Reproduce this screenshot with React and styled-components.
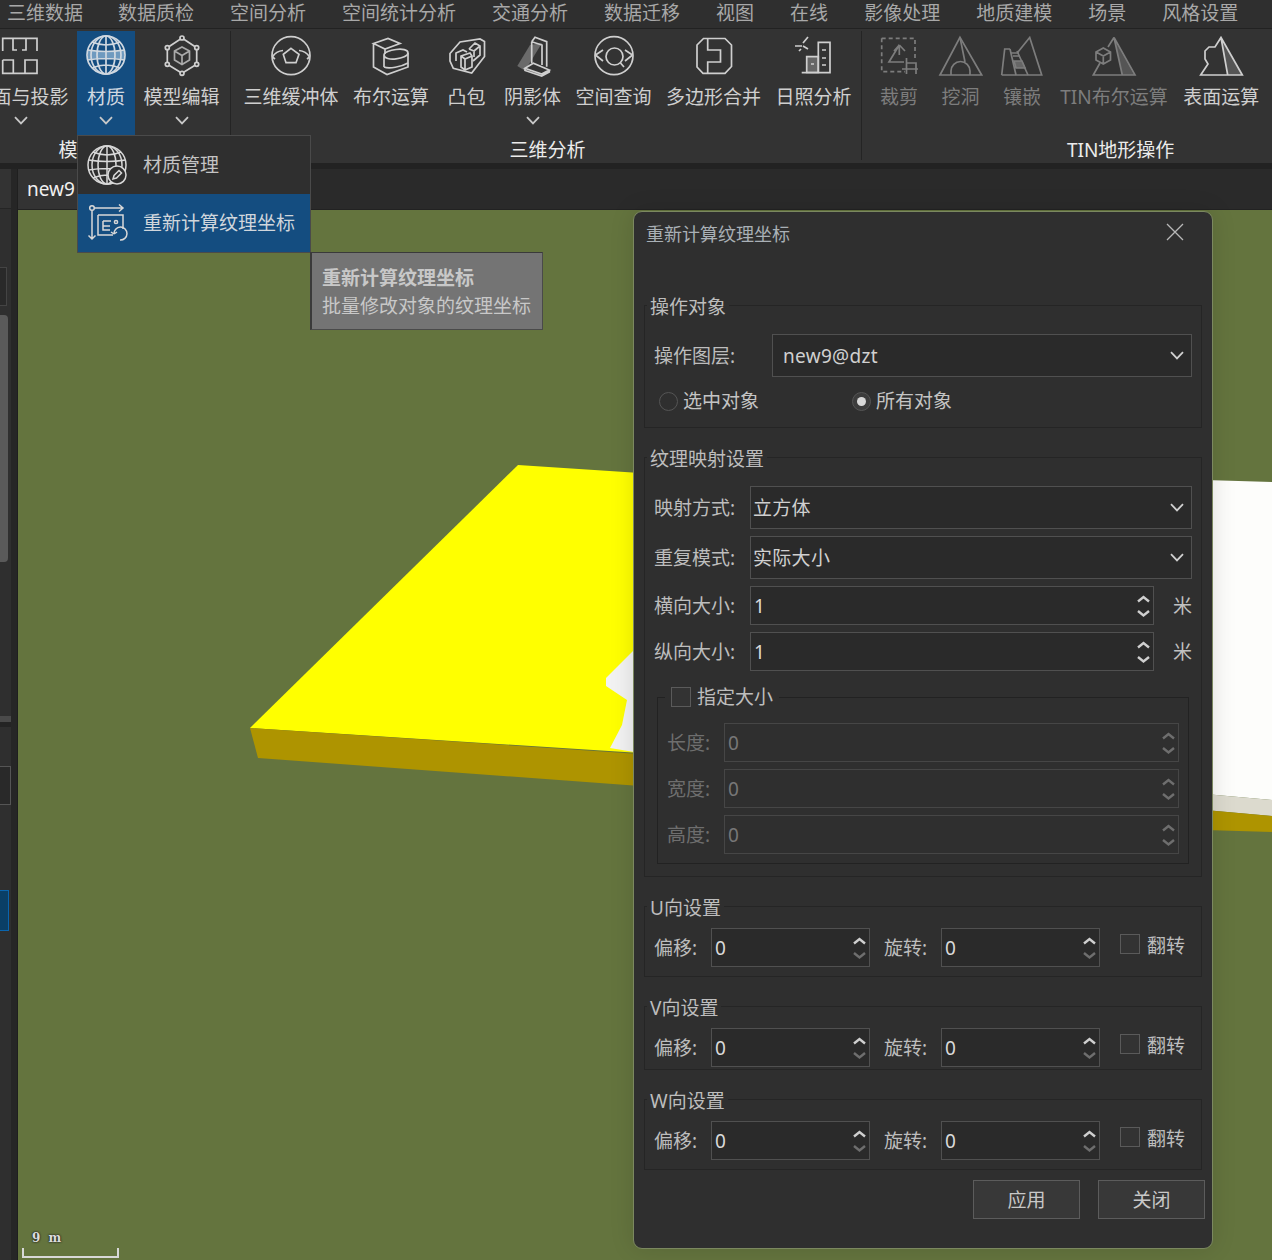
import React from 'react'
import styled, { createGlobalStyle } from 'styled-components'

const GlobalStyle = createGlobalStyle`
    html, body {
        margin: 0;
        padding: 0;
        background: #2f2f2f;
    }
    * {
        box-sizing: border-box;
    }
`

const menus = ['三维数据', '数据质检', '空间分析', '空间统计分析', '交通分析', '数据迁移', '视图', '在线', '影像处理', '地质建模', '场景', '风格设置']

function Chevron({ size = 14 }) {
    return (
        <Glyph width={size} height={9} viewBox="0 0 14 9" $w={1.8}>
            <path d="M1 1.2L7 7.4L13 1.2" />
        </Glyph>
    )
}

function Spinner({ upDim, downDim }) {
    return (
        <SpinBox>
            <SpinArrow width="13" height="26" viewBox="0 0 13 26" $dim={upDim}>
                <path d="M1 8.500L6.500 4L12 8.500" />
            </SpinArrow>
            <SpinArrow width="13" height="26" viewBox="0 0 13 26" $dim={downDim}>
                <path d="M1 18L6.500 22.500L12 18" />
            </SpinArrow>
        </SpinBox>
    )
}

function RibbonIcon({ children }) {
    return (
        <IconBox>
            <Glyph width="48" height="48" viewBox="0 0 48 48" $w={1.7}>
                {children}
            </Glyph>
        </IconBox>
    )
}

const FloorIcon = () => (
    <RibbonIcon>
        <path d="M5.700 20V7.300H40V20M16 8V19H20M29 8V19H25" />
        <path d="M5.700 29H16.300V42M5.700 29V42.300H40V29H28V42" />
    </RibbonIcon>
)

const GlobeLines = () => (
    <>
        <circle cx="24" cy="24" r="19" />
        <ellipse cx="24" cy="24" rx="9" ry="19" />
        <ellipse cx="24" cy="24" rx="15" ry="19" />
        <path d="M24 5V43M10 11Q24 17 38 11M5.500 19Q24 22 42.500 19M5.500 29Q24 26 42.500 29M10 37Q24 31 38 37" />
    </>
)

const GlobeIcon = () => (
    <RibbonIcon>
        <path d="M6 19.500Q24 22 42 19.500V29Q24 26.500 6 29Z" fill="#6f9abf" stroke="none" />
        <GlobeLines />
    </RibbonIcon>
)

const ModelIcon = () => (
    <RibbonIcon>
        <path d="M24 7L38.700 16.700V33.300L24 42.300L9.300 33.300V16.700Z" />
        <g fill="#333">
            <circle cx="24" cy="7" r="2" />
            <circle cx="38.700" cy="16.700" r="2" />
            <circle cx="38.700" cy="33.300" r="2" />
            <circle cx="24" cy="42.300" r="2" />
            <circle cx="9.300" cy="33.300" r="2" />
            <circle cx="9.300" cy="16.700" r="2" />
        </g>
        <path d="M24 16L31.500 20V29L24 33.500L16.500 29V20ZM16.500 20L24 24.500L31.500 20M24 24.500V33.500" stroke="#aaa" />
    </RibbonIcon>
)

const BufferIcon = () => (
    <RibbonIcon>
        <circle cx="24" cy="24.700" r="19" />
        <path d="M24 17.400L32 23.400L29 31.700H19L16.300 23.400Z" />
        <path d="M5.500 26Q9 20 16 19.500M42.500 26Q39 20 32 19.500M5.500 26L8 28M42.500 26L40 28" />
    </RibbonIcon>
)

const BooleanIcon = () => (
    <RibbonIcon>
        <path d="M6.500 12.500L21 7.500L33 12.500L18 18ZM6.500 12.500V36L20 43.500L41 36V22M18 18V23" />
        <path d="M17 24C17 19 41 15 41 22C41 28 17 31 17 24ZM17 24V36" />
        <path d="M17 36C22 38 34 36 41 32" />
    </RibbonIcon>
)

const HullIcon = () => (
    <RibbonIcon>
        <path d="M7 22.500L17 11L37 8L41.500 10.500V25.500L28.700 42L10.300 37.300L7 30Z" />
        <path d="M18 25L27 22L29 25V36L22 39L18 36ZM18 25L22 28L29 25M22 28V39" />
        <path d="M13 30V22L20 19L24 21M26 18L32 12L37 15V24L30 30M26 18L31 20L37 15M31 20V26" />
    </RibbonIcon>
)

const ShadowIcon = () => (
    <RibbonIcon>
        <path d="M21 14L8.300 35L16 39.700L33 12Z" fill="#6a6a6a" stroke="none" />
        <path d="M22.700 10.700L26 6.300L37.700 10.700V35.700M22.700 10.700L33 14V34M22.700 10.700V32.300" />
        <path d="M16 37.300L24.300 32.300L40.300 39L32.700 43ZM16 37.300V39.500L32.700 45L40.300 41V39" />
    </RibbonIcon>
)

const QueryIcon = () => (
    <RibbonIcon>
        <circle cx="24" cy="24.700" r="19" />
        <circle cx="24.500" cy="25.500" r="8.500" />
        <path d="M30.500 32L34 36M5.500 24L13 19M5.500 24L13 30M42.500 24L35 19M42.500 24L35 30" />
    </RibbonIcon>
)

const MergeIcon = () => (
    <RibbonIcon>
        <path d="M13.500 7.500H35L41.500 14V35.500L35 42.300H13L7 36V14Z" />
        <path d="M17.700 7.500V19H30.500V31H17.700V42" />
    </RibbonIcon>
)

const SunIcon = () => (
    <RibbonIcon>
        <path d="M16.700 25.700H28.300V41.500H16.700Z" fill="#666" />
        <path d="M28.300 41.700V11.300H40V41.700H11.700" />
        <path d="M32 19H36M32 27H36M32 34H36M21 33H24" />
        <path d="M5 15H12M13 12L18 6M13 15L18 18M11 18L9 20" />
    </RibbonIcon>
)

const CropIcon = () => (
    <RibbonIcon>
        <path d="M6.700 7.300H40V30M6.700 7.300V40.700H30" strokeDasharray="4 3" />
        <path d="M24.300 14L14 31H29M24.300 14L19 20M24.300 14L30 20M24.300 14V24" />
        <path d="M31.500 27V43M27 38H43M31.500 32H41V43" />
    </RibbonIcon>
)

const HoleIcon = () => (
    <RibbonIcon>
        <path d="M23 6.300L44.700 44H3Z" />
        <path d="M14 44V40A9.500 9.500 0 0 1 33 40V44M23 6.300L28 31" />
    </RibbonIcon>
)

const MosaicIcon = () => (
    <RibbonIcon>
        <path d="M3.700 44L6.700 18H12M20 21L31.700 6.500L43.700 44H3.700" />
        <path d="M12 18L18 44M19 20L30 44" />
        <path d="M16 30H24L27 37H18Z" fill="#666" />
        <path d="M13 22H21M15 25H22" />
    </RibbonIcon>
)

const TinBoolIcon = () => (
    <RibbonIcon>
        <path d="M24 8L32.300 44H44Z" fill="#555" stroke="none" />
        <path d="M24 6.500L45 44H3.300L10 32M24 6.500L18 16M24 6.500L32.300 44" />
        <path d="M13.300 17L20.500 21V29L13.300 33L6 29V21ZM6 21L13.300 25L20.500 21M13.300 25V33" />
    </RibbonIcon>
)

const SurfaceIcon = () => (
    <RibbonIcon>
        <path d="M24 8L30.700 44H45Z" fill="#555" stroke="none" />
        <path d="M24 6.500L45.300 44H3.700L11 33L8 28L8 20L12 16L18 16ZM24 6.500L30.700 44" />
    </RibbonIcon>
)

const ManageIcon = () => (
    <MenuGlyph width="48" height="48" viewBox="0 0 48 48" $w={1.5}>
        <GlobeLines />
        <circle cx="34" cy="34" r="9" fill="#2f2f2f" />
        <path d="M30 38L31 34.500L36 29.500L38.500 32L33.500 37Z" />
    </MenuGlyph>
)

const RecalcIcon = () => (
    <MenuGlyph width="48" height="48" viewBox="0 0 48 48" $w={1.5}>
        <circle cx="9" cy="9" r="2.300" />
        <path d="M11.500 9H40M36 5.500L40 9L36 12.500M9 11.500V40M5.500 36.500L9 40L12.500 36.500" />
        <path d="M15 16H40V30M15 16V36H30" />
        <path d="M20 22H28M20 22V31H27M20 27L27 27" />
        <circle cx="33" cy="23" r="1.600" />
        <path d="M31 35A6.500 6.500 0 1 1 37 41M31 35L28 33M31 35L34 33" />
    </MenuGlyph>
)

const firstGroup = [
    { label: '立面与投影', icon: <FloorIcon />, more: true },
    { label: '材质', icon: <GlobeIcon />, more: true, active: true },
    { label: '模型编辑', icon: <ModelIcon />, more: true },
]

const secondGroup = [
    { label: '三维缓冲体', icon: <BufferIcon /> },
    { label: '布尔运算', icon: <BooleanIcon /> },
    { label: '凸包', icon: <HullIcon /> },
    { label: '阴影体', icon: <ShadowIcon />, more: true },
    { label: '空间查询', icon: <QueryIcon /> },
    { label: '多边形合并', icon: <MergeIcon /> },
    { label: '日照分析', icon: <SunIcon /> },
]

const thirdGroup = [
    { label: '裁剪', icon: <CropIcon />, dim: true },
    { label: '挖洞', icon: <HoleIcon />, dim: true },
    { label: '镶嵌', icon: <MosaicIcon />, dim: true },
    { label: 'TIN布尔运算', icon: <TinBoolIcon />, dim: true },
    { label: '表面运算', icon: <SurfaceIcon /> },
]

function ToolGroup({ title, tools, width, left, right, gap, last }) {
    return (
        <Group $width={width} $left={left} $right={right} $last={last}>
            <Tools $gap={gap}>
                {tools.map((t) => (
                    <Tool key={t.label} $active={t.active} $dim={t.dim}>
                        {t.icon}
                        <ToolLabel>{t.label}</ToolLabel>
                        {t.more && <More><Chevron /></More>}
                    </Tool>
                ))}
            </Tools>
            <GroupLabel>{title}</GroupLabel>
        </Group>
    )
}

function OffsetGroup({ axis, bottom }) {
    return (
        <Box $bottom={bottom} $top={10}>
            <Legend>{axis}向设置</Legend>
            <Row>
                <FieldLabel $width={57}>偏移:</FieldLabel>
                <Input $width={159}>0<Spinner downDim /></Input>
                <FieldLabel $width={57} $left={14}>旋转:</FieldLabel>
                <Input $width={159}>0<Spinner downDim /></Input>
                <FlipCheck>
                    <CheckBox />
                    <FlipText>翻转</FlipText>
                </FlipCheck>
            </Row>
        </Box>
    )
}

function SizeRow({ label }) {
    return (
        <Row>
            <FieldLabel $width={57} $dim>{label}:</FieldLabel>
            <Input $grow $off>0<Spinner upDim downDim /></Input>
        </Row>
    )
}

function Dialog() {
    return (
        <DialogBox>
            <TitleBar>
                <Title>重新计算纹理坐标</Title>
                <svg width="18" height="18" viewBox="0 0 18 18" fill="none" stroke="#b8b8b8" strokeWidth="1.3">
                    <path d="M1 1L17 17M17 1L1 17" />
                </svg>
            </TitleBar>
            <Body>
                <Box $bottom={14} $top={17}>
                    <Legend>操作对象</Legend>
                    <Row>
                        <FieldLabel $width={118}>操作图层:</FieldLabel>
                        <Select $text={10}>new9@dzt<Chevron /></Select>
                    </Row>
                    <RadioRow>
                        <RadioItem><Radio /> 选中对象</RadioItem>
                        <RadioItem><Radio $on /> 所有对象</RadioItem>
                    </RadioRow>
                </Box>
                <Box $bottom={12} $top={17}>
                    <Legend>纹理映射设置</Legend>
                    <Stack>
                        <Row>
                            <FieldLabel $width={96}>映射方式:</FieldLabel>
                            <Select $text={2}>立方体<Chevron /></Select>
                        </Row>
                        <Row>
                            <FieldLabel $width={96}>重复模式:</FieldLabel>
                            <Select $text={2}>实际大小<Chevron /></Select>
                        </Row>
                        <Row>
                            <FieldLabel $width={96}>横向大小:</FieldLabel>
                            <Input $grow>1<Spinner /></Input>
                            <Unit>米</Unit>
                        </Row>
                        <Row>
                            <FieldLabel $width={96}>纵向大小:</FieldLabel>
                            <Input $grow>1<Spinner /></Input>
                            <Unit>米</Unit>
                        </Row>
                    </Stack>
                    <InnerBox>
                        <InnerLegend><CheckBox />指定大小</InnerLegend>
                        <Stack>
                            <SizeRow label="长度" />
                            <SizeRow label="宽度" />
                            <SizeRow label="高度" />
                        </Stack>
                    </InnerBox>
                </Box>
                <OffsetGroup axis="U" bottom={9} />
                <OffsetGroup axis="V" bottom={2} />
                <OffsetGroup axis="W" bottom={9} />
                <Actions>
                    <Action>应用</Action>
                    <Action>关闭</Action>
                </Actions>
            </Body>
        </DialogBox>
    )
}

export default function App() {
    return (
        <Page>
            <GlobalStyle />
            <MenuBar>
                {menus.map((m) => <MenuItem key={m}>{m}</MenuItem>)}
            </MenuBar>
            <Ribbon>
                <ToolGroup title="模型处理" tools={firstGroup} left={6.5} right={4.5} gap={2.5} />
                <ToolGroup title="三维分析" tools={secondGroup} left={6.5} right={3.5} gap={2.5} />
                <ToolGroup title="TIN地形操作" tools={thirdGroup} left={8} right={3} gap={3.4} width={512} last />
            </Ribbon>
            <Workspace>
                <Sidebar>
                    <SideHead />
                    <SideField />
                    <SideScroll />
                    <SideSplit />
                    <SideField $gap={44} $bright />
                    <SideSelected />
                </Sidebar>
                <Gutter />
                <Main>
                    <TabBar>
                        <Tab>new9</Tab>
                    </TabBar>
                    <Viewport>
                        <Scene viewBox="18 210 1254 1050" width="1254" height="1050">
                            <polygon points="518,465 640,473 640,753 250,728" fill="#ffff00" />
                            <polygon points="250,728 640,754 640,786 258,758" fill="#ae9400" />
                            <polygon points="640,644 606,678 606,686 627,700 622,725 610,748 640,753" fill="#f2f2f2" />
                            <polygon points="1205,480 1272,482 1272,800 1205,794" fill="#fdfdfb" />
                            <polygon points="1205,794 1272,800 1272,816 1205,810" fill="#dcdace" />
                            <polygon points="1205,810 1272,816 1272,832 1205,830" fill="#ae9400" />
                        </Scene>
                        <ScaleText>9 m</ScaleText>
                        <ScaleBar />
                    </Viewport>
                </Main>
            </Workspace>
            <Dropdown>
                <DropItem>
                    <ManageIcon />
                    材质管理
                </DropItem>
                <DropItem $active>
                    <RecalcIcon />
                    重新计算纹理坐标
                </DropItem>
            </Dropdown>
            <Tooltip>
                <TipTitle>重新计算纹理坐标</TipTitle>
                <TipText>批量修改对象的纹理坐标</TipText>
            </Tooltip>
            <Dialog />
        </Page>
    )
}

const Page = styled.div`
    position: relative;
    width: 1272px;
    height: 1260px;
    overflow: hidden;
    display: flex;
    flex-direction: column;
    background: #2f2f2f;
    font-family: "Noto Sans", "Noto Sans CJK SC", sans-serif;
    font-size: 19px;
    line-height: 24px;
    color: #c4c4c4;
`

const Glyph = styled.svg`
    display: block;
    fill: none;
    stroke: currentColor;
    stroke-width: ${(p) => p.$w};
`

const MenuBar = styled.div`
    display: flex;
    gap: 36px;
    flex: none;
    height: 29px;
    padding: 1px 0 0 7px;
    background: #2f2f2f;
    border-bottom: 1px solid #222;
    color: #a8a8a8;
    white-space: nowrap;
`

const MenuItem = styled.div`
    flex: none;

    &:first-child {
        margin-right: -1px;
    }
`

const Ribbon = styled.div`
    display: flex;
    flex: none;
    height: 134px;
    padding-top: 2px;
    margin-left: -39px;
    background: #333;
`

const Group = styled.div`
    flex: none;
    width: ${(p) => (p.$width ? p.$width + 'px' : 'auto')};
    height: 129px;
    padding: 0 ${(p) => p.$right}px 0 ${(p) => p.$left}px;
    border-right: ${(p) => (p.$last ? 'none' : '1px solid #242424')};
`

const Tools = styled.div`
    display: flex;
    gap: ${(p) => p.$gap}px;
`

const Tool = styled.div`
    display: flex;
    flex-direction: column;
    align-items: center;
    flex: none;
    min-width: 58px;
    height: 104px;
    padding: 0 6px;
    background: ${(p) => (p.$active ? '#144d80' : 'transparent')};
    color: ${(p) => (p.$dim ? '#7d7d7d' : p.$active ? '#d0d8e0' : '#cfcfcf')};
`

const IconBox = styled.div`
    flex: none;
    width: 48px;
    height: 48px;
    margin: 0 -6px;
`

const ToolLabel = styled.div`
    margin-top: 6px;
    white-space: nowrap;
`

const More = styled.div`
    margin-top: 7px;
    color: #c8c8c8;
`

const GroupLabel = styled.div`
    margin-top: 3px;
    text-align: center;
    white-space: nowrap;
    color: #ececec;
`

const Workspace = styled.div`
    display: flex;
    flex: 1;
    min-height: 0;
    border-top: 6px solid #222;
`

const Sidebar = styled.div`
    flex: none;
    width: 11px;
    background: #2f2f2f;
`

const SideHead = styled.div`
    height: 40px;
    background: #333;
    border-bottom: 1px solid #252525;
`

const SideField = styled.div`
    width: ${(p) => (p.$bright ? '11px' : '7px')};
    height: 39px;
    margin-top: ${(p) => p.$gap || 58}px;
    background: #292929;
    border: 1px solid ${(p) => (p.$bright ? '#555' : '#444')};
    border-left: none;
`

const SideScroll = styled.div`
    width: 8px;
    height: 247px;
    margin-top: 9px;
    border-radius: 0 4px 4px 0;
    background: #5a5a5a;
`

const SideSplit = styled.div`
    height: 6px;
    margin-top: 154px;
    background: #4a4a4a;
    box-shadow: 0 5px 0 #242424;
`

const SideSelected = styled.div`
    width: 9px;
    height: 41px;
    margin-top: 85px;
    background: #0a3f66;
    border: 1px solid #0a65ae;
    border-left: none;
`

const Gutter = styled.div`
    flex: none;
    width: 7px;
    background: #262626;
    border-right: 1px solid #1f1f1f;
`

const Main = styled.div`
    display: flex;
    flex-direction: column;
    flex: 1;
    min-width: 0;
`

const TabBar = styled.div`
    flex: none;
    height: 41px;
    background: #2a2a2a;
    border-bottom: 1px solid #222;
`

const Tab = styled.div`
    width: 110px;
    height: 40px;
    padding: 8px 0 0 9px;
    background: #333;
    color: #f0f0f0;
`

const Viewport = styled.div`
    position: relative;
    flex: 1;
    background: #64743e;
`

const Scene = styled.svg`
    display: block;
`

const ScaleText = styled.div`
    position: absolute;
    left: 14px;
    bottom: 14px;
    font-family: "DejaVu Serif", serif;
    font-size: 12px;
    font-weight: 700;
    line-height: 16px;
    word-spacing: 4px;
    color: #dcdcdc;
    text-shadow: 0 0 2px #222, 0 0 2px #222;
`

const ScaleBar = styled.div`
    position: absolute;
    left: 4px;
    bottom: 2px;
    width: 97px;
    height: 10px;
    border: 2px solid #d8d8d8;
    border-top: none;
`

const Dropdown = styled.div`
    position: absolute;
    left: 77px;
    top: 135px;
    width: 234px;
    background: #2f2f2f;
    border: 1px solid #4a4a4a;
`

const DropItem = styled.div`
    display: flex;
    align-items: center;
    gap: 12px;
    height: 58px;
    padding-left: 5px;
    white-space: nowrap;
    background: ${(p) => (p.$active ? '#144d80' : 'transparent')};
    color: ${(p) => (p.$active ? '#d0d6dc' : '#c4c4c4')};
`

const MenuGlyph = styled(Glyph)`
    flex: none;
    color: #d8d8d8;
`

const Tooltip = styled.div`
    position: absolute;
    left: 310px;
    top: 252px;
    width: 233px;
    height: 78px;
    padding: 13px 0 0 10px;
    background: #747474;
    border: 1px solid #4a4a4a;
    border-left: 2px solid #3a3a3a;
    border-top-color: #3a3a3a;
    white-space: nowrap;
    color: #c8c8c8;
`

const TipTitle = styled.div`
    font-weight: 700;
`

const TipText = styled.div`
    margin-top: 4px;
`

const DialogBox = styled.div`
    position: absolute;
    left: 633px;
    top: 211px;
    width: 580px;
    height: 1038px;
    background: #2f2f2f;
    border: 1px solid #7b8860;
    border-radius: 9px;
    box-shadow: 0 0 24px rgba(0, 0, 0, 0.12);
`

const TitleBar = styled.div`
    display: flex;
    align-items: center;
    justify-content: space-between;
    height: 42px;
    margin-bottom: 39px;
    padding: 0 28px 2px 12px;
`

const Title = styled.div`
    padding-top: 3px;
    font-size: 18px;
    color: #a9b0b6;
`

const Body = styled.div`
    display: flex;
    flex-direction: column;
    gap: 17px;
    padding: 0 10px;
`

const Box = styled.fieldset`
    min-width: 0;
    margin: 0;
    padding: ${(p) => p.$top}px 9px ${(p) => p.$bottom}px;
    border: 1px solid #252525;
`

const Legend = styled.legend`
    position: relative;
    top: 2px;
    margin-left: -7px;
    padding: 0 3px;
    color: #bdbdbd;
`

const Row = styled.div`
    display: flex;
    align-items: center;
`

const Stack = styled.div`
    display: flex;
    flex-direction: column;
    gap: 7px;
`

const FieldLabel = styled.div`
    flex: none;
    width: ${(p) => p.$width}px;
    margin-left: ${(p) => p.$left || 0}px;
    white-space: nowrap;
    color: ${(p) => (p.$dim ? '#6e6e6e' : '#bdbdbd')};
`

const Select = styled.div`
    display: flex;
    align-items: center;
    justify-content: space-between;
    flex: 1;
    height: 43px;
    padding: 0 7px 0 ${(p) => p.$text}px;
    background: #2a2a2a;
    border: 1px solid #505050;
    color: #d0d0d0;
    letter-spacing: 0.3px;
`

const Input = styled.div`
    position: relative;
    display: flex;
    align-items: center;
    flex: ${(p) => (p.$grow ? '1' : 'none')};
    width: ${(p) => (p.$width ? p.$width + 'px' : 'auto')};
    height: 39px;
    padding-left: 3px;
    background: ${(p) => (p.$off ? 'transparent' : '#2a2a2a')};
    border: 1px solid ${(p) => (p.$off ? '#464646' : '#505050')};
    color: ${(p) => (p.$off ? '#777' : '#dadada')};
`

const SpinBox = styled.div`
    position: absolute;
    right: 3px;
    top: 6px;
    width: 13px;
    height: 26px;
`

const SpinArrow = styled.svg`
    position: absolute;
    left: 0;
    top: 0;
    fill: none;
    stroke: ${(p) => (p.$dim ? '#6e6e6e' : '#cfcfcf')};
    stroke-width: 2.4;
`

const Unit = styled.div`
    flex: none;
    width: 38px;
    text-align: right;
    color: #c0c0c0;
`

const RadioRow = styled.div`
    display: flex;
    margin: 12px 0 0 5px;
`

const RadioItem = styled.div`
    display: flex;
    align-items: center;
    gap: 5px;
    width: 193px;
`

const Radio = styled.span`
    flex: none;
    position: relative;
    width: 19px;
    height: 19px;
    border: 1px solid #555;
    border-radius: 50%;
    background: ${(p) => (p.$on ? '#3c3c3c' : 'transparent')};

    &::after {
        content: "";
        display: ${(p) => (p.$on ? 'block' : 'none')};
        position: absolute;
        left: 4px;
        top: 4px;
        width: 9px;
        height: 9px;
        border-radius: 50%;
        background: #d8d8d8;
    }
`

const InnerBox = styled.fieldset`
    min-width: 0;
    margin: 14px 3px 0;
    padding: 14px 9px 9px;
    border: 1px solid #222;
`

const InnerLegend = styled.legend`
    display: flex;
    align-items: center;
    gap: 6px;
    margin-left: -2px;
    padding: 0 6px;
    color: #bdbdbd;
`

const CheckBox = styled.span`
    flex: none;
    width: 20px;
    height: 20px;
    border: 1px solid #5a5a5a;
    background: #333;
`

const FlipCheck = styled.div`
    display: flex;
    align-items: center;
    gap: 7px;
    align-self: flex-start;
    margin: 6px 0 0 20px;
    height: 20px;
    white-space: nowrap;
    color: #bdbdbd;
`

const FlipText = styled.span`
    padding-top: 3px;
`

const Actions = styled.div`
    display: flex;
    justify-content: flex-end;
    gap: 18px;
    margin: -7px -3px 0 0;
`

const Action = styled.div`
    display: flex;
    align-items: center;
    justify-content: center;
    width: 107px;
    height: 39px;
    background: #383838;
    border: 1px solid #5c5c5c;
    color: #c8c8c8;
`
